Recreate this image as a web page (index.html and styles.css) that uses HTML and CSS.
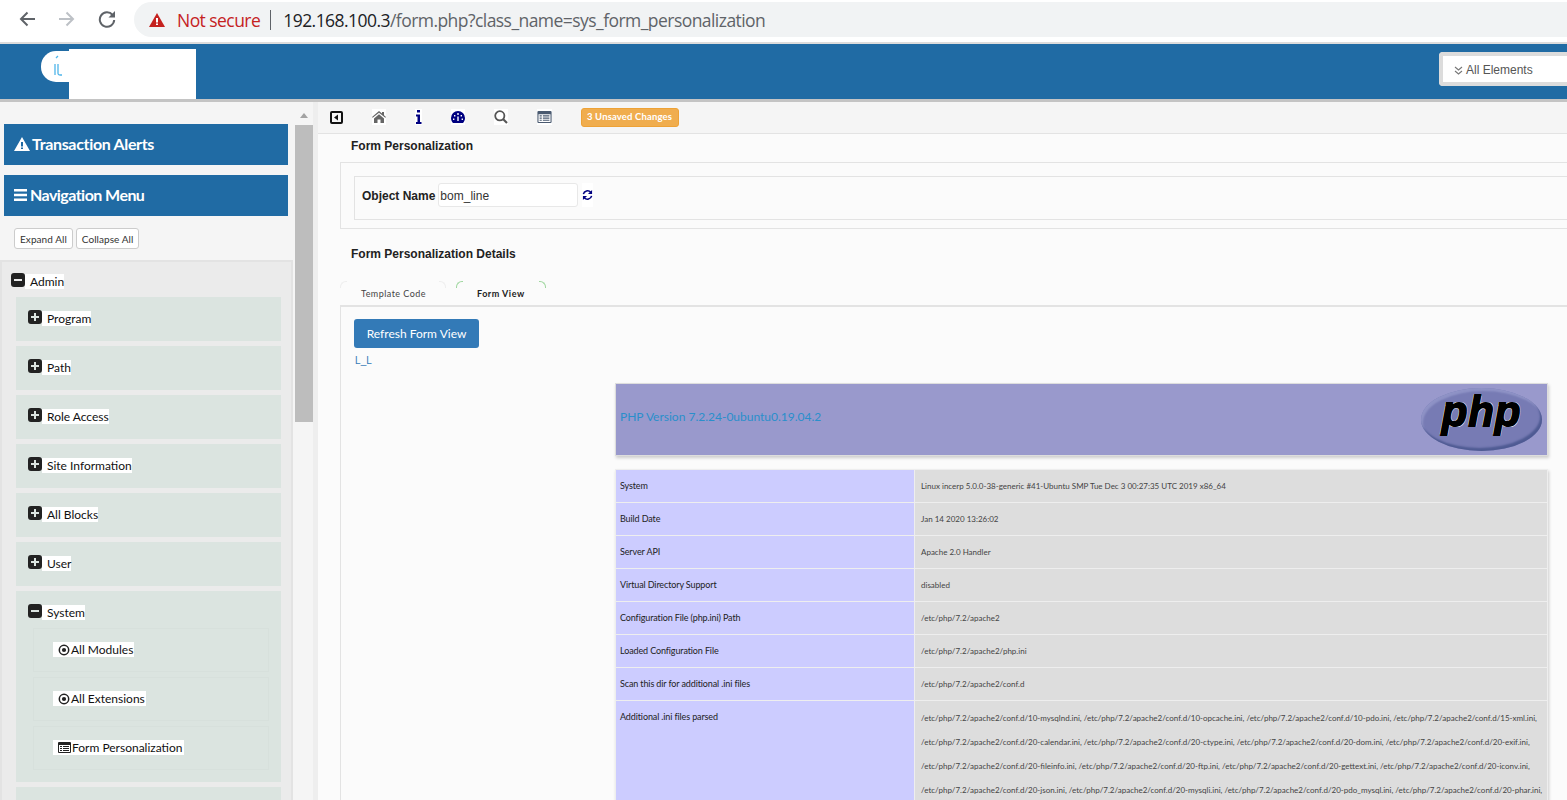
FILE: index.html
```html
<!DOCTYPE html>
<html lang="en">
<head>
<meta charset="utf-8">
<title>Form Personalization</title>
<link rel="stylesheet" href="styles.css">
</head>
<body>
<svg class="defs" aria-hidden="true">
  <symbol id="plus" viewBox="0 0 14 14"><path fill-rule="evenodd" d="M3 0h8a3 3 0 0 1 3 3v8a3 3 0 0 1-3 3H3a3 3 0 0 1-3-3V3a3 3 0 0 1 3-3zM6 3v3H3v2h3v3h2V8h3V6H8V3z"/></symbol>
  <symbol id="minus" viewBox="0 0 14 14"><path fill-rule="evenodd" d="M3 0h8a3 3 0 0 1 3 3v8a3 3 0 0 1-3 3H3a3 3 0 0 1-3-3V3a3 3 0 0 1 3-3zM3 6v2h8V6z"/></symbol>
  <symbol id="dot" viewBox="0 0 12 12"><circle cx="6" cy="6" r="4.700" fill="none" stroke="currentColor" stroke-width="1.500"/><circle cx="6" cy="6" r="2.100"/></symbol>
  <symbol id="list" viewBox="0 0 13 11"><path fill-rule="evenodd" d="M1 0h11a1 1 0 0 1 1 1v9a1 1 0 0 1-1 1H1a1 1 0 0 1-1-1V1a1 1 0 0 1 1-1zM1 3v7h11V3zM2 4h2v1H2zm3 0h6v1H5zM2 6h2v1H2zm3 0h6v1H5zM2 8h2v1H2zm3 0h6v1H5z"/></symbol>
</svg>

<div class="chrome">
  <svg class="nav-ic" viewBox="0 0 18 18"><path d="M17 9H3M9.500 2.500 3 9l6.500 6.500" fill="none" stroke="#5f6368" stroke-width="2"/></svg>
  <svg class="nav-ic" viewBox="0 0 18 18"><path d="M1 9h14M8.500 2.500 15 9l-6.500 6.500" fill="none" stroke="#bdc1c6" stroke-width="2"/></svg>
  <svg class="nav-ic" viewBox="0 0 18 18"><path d="M14.600 5A7.200 7.200 0 1 0 16.200 10" fill="none" stroke="#5f6368" stroke-width="2"/><path d="M17 1v6.500h-6.500z" fill="#5f6368"/></svg>
  <div class="omnibox">
    <svg class="warn-ic" viewBox="0 0 16 14"><path d="M8 0l8 14H0z" fill="#c5221f"/><path d="M7 5h2v4.500H7zM7 10.500h2V12H7z" fill="#fff"/></svg>
    <span class="insecure">Not secure</span>
    <span class="sep"></span>
    <span class="url"><b>192.168.100.3</b>/form.php?class_name=sys_form_personalization</span>
  </div>
</div>

<header class="topbar">
  <div class="logo">
    <div class="logo-mark">
      <svg viewBox="0 0 28 31"><path d="M15 7l2-2M14 13v11M17 13v9.500q0 1.500 2 1.500h2" fill="none" stroke="#4fb5ea" stroke-width="1.300"/></svg>
    </div>
    <div class="logo-mask"></div>
  </div>
  <div class="search-box">
    <svg class="chev" viewBox="0 0 9 9"><path d="M1 1l3.500 3L8 1M1 5l3.500 3L8 5" fill="none" stroke="#777" stroke-width="1.100"/></svg>
    <span>All Elements</span>
  </div>
</header>

<div class="body-row">
  <aside class="sidebar">
    <div class="side-inner">
      <h2 class="side-title alerts">
        <svg class="title-ic" viewBox="0 0 16 14"><path fill-rule="evenodd" d="M8 0l8 14H0zM7 5v4.500h2V5zm0 5.500V12h2v-1.500z" fill="#fff"/></svg>Transaction Alerts
      </h2>
      <h2 class="side-title menu">
        <svg class="title-ic bars" viewBox="0 0 13 12"><path d="M0 0h13v2.400H0zM0 4.800h13v2.400H0zM0 9.600h13V12H0z" fill="#fff"/></svg>Navigation Menu
      </h2>
      <div class="expand-row">
        <button class="mini-btn">Expand All</button>
        <button class="mini-btn">Collapse All</button>
      </div>
      <div class="tree">
        <div class="tree-root"><svg class="tog"><use href="#minus"/></svg><span class="lbl">Admin</span></div>
        <div class="node"><svg class="tog"><use href="#plus"/></svg><span class="lbl">Program</span></div>
        <div class="node"><svg class="tog"><use href="#plus"/></svg><span class="lbl">Path</span></div>
        <div class="node"><svg class="tog"><use href="#plus"/></svg><span class="lbl">Role Access</span></div>
        <div class="node"><svg class="tog"><use href="#plus"/></svg><span class="lbl">Site Information</span></div>
        <div class="node"><svg class="tog"><use href="#plus"/></svg><span class="lbl">All Blocks</span></div>
        <div class="node"><svg class="tog"><use href="#plus"/></svg><span class="lbl">User</span></div>
        <div class="node open">
          <div class="node-head"><svg class="tog"><use href="#minus"/></svg><span class="lbl">System</span></div>
          <div class="leaf"><span class="leaf-lbl"><svg class="leaf-ic"><use href="#dot"/></svg>All Modules</span></div>
          <div class="leaf"><span class="leaf-lbl"><svg class="leaf-ic"><use href="#dot"/></svg>All Extensions</span></div>
          <div class="leaf"><span class="leaf-lbl"><svg class="leaf-ic wide"><use href="#list"/></svg>Form Personalization</span></div>
        </div>
        <div class="node"></div>
      </div>
    </div>
    <div class="scrollbar">
      <span class="scroll-up"></span>
      <span class="scroll-thumb"></span>
    </div>
  </aside>

  <main class="main">
    <div class="toolbar">
      <svg class="tool t-toggle" viewBox="0 0 13 13"><path fill-rule="evenodd" d="M2 0h9a2 2 0 0 1 2 2v9a2 2 0 0 1-2 2H2a2 2 0 0 1-2-2V2a2 2 0 0 1 2-2zM2 2v9h9V2z" fill="#111"/><path d="M8 3.500v6L4 6.500z" fill="#111"/></svg>
      <span class="tool-bg"><svg class="tool" viewBox="0 0 14 12"><path d="M7 0l3 2.500V1h2v3.200L14 6l-.7.800L7 1.700.7 6.800 0 6zM2 7.500 7 3.300l5 4.200V12H8.500V8.500h-3V12H2z" fill="#666"/></svg></span>
      <span class="tool-bg"><svg class="tool t-info" viewBox="3.700 0 6.600 14"><path d="M5.500 0h3v2.500h-3zM4.500 4.500h4V12H10v2H4.500v-2H6V6.500H4.500z" fill="#000080"/></svg></span>
      <span class="tool-bg"><svg class="tool" viewBox="0 0 14 14"><path fill-rule="evenodd" d="M7 1a7 7 0 0 1 7 7c0 2-.8 3.600-2 5H2C.8 11.600 0 10 0 8a7 7 0 0 1 7-7zM6.300 3v2h1.400V3zM3 5v1.500h1.400V5zm6.600 0v1.500H11V5zM2 8.500V10h1.400V8.500zm8.600 0V10H12V8.500zM6.300 6.500V11h1.400V6.500z" fill="#000080"/></svg></span>
      <span class="tool-bg"><svg class="tool" viewBox="0 0 14 14"><circle cx="5.800" cy="5.800" r="4.600" fill="none" stroke="#555" stroke-width="1.800"/><path d="M9 9l4 4" stroke="#555" stroke-width="2.200"/></svg></span>
      <span class="tool-bg"><svg class="tool t-list"><use href="#list"/></svg></span>
      <span class="unsaved">3 Unsaved Changes</span>
    </div>

    <div class="content">
      <h3 class="sec-title">Form Personalization</h3>
      <section class="outer-box">
        <div class="inner-box">
          <label class="field-label">Object Name</label>
          <input class="field-input" type="text" value="bom_line">
          <span class="refresh-bg"><svg class="refresh" viewBox="0 0 12 12"><path d="M1.500 5A4.600 4.600 0 0 1 9.500 3M10.500 7A4.600 4.600 0 0 1 2.500 9" fill="none" stroke="#000080" stroke-width="1.700"/><path d="M11 .5V5H6.500zM1 11.500V7h4.500z" fill="#000080"/></svg></span>
        </div>
      </section>

      <h3 class="sec-title second">Form Personalization Details</h3>

      <div class="tabs">
        <span class="tab">Template Code</span>
        <span class="tab active">Form View</span>
      </div>

      <section class="tab-panel">
        <button class="refresh-btn">Refresh Form View</button>
        <a class="ll">L_L</a>

        <div class="phpinfo">
          <div class="php-head">
            <a class="php-ver">PHP Version 7.2.24-0ubuntu0.19.04.2</a>
            <div class="php-logo"><span class="php-word">php</span></div>
          </div>
          <table class="php-table">
            <tr><td class="k">System</td><td class="v">Linux incerp 5.0.0-38-generic #41-Ubuntu SMP Tue Dec 3 00:27:35 UTC 2019 x86_64</td></tr>
            <tr><td class="k">Build Date</td><td class="v">Jan 14 2020 13:26:02</td></tr>
            <tr><td class="k">Server API</td><td class="v">Apache 2.0 Handler</td></tr>
            <tr><td class="k">Virtual Directory Support</td><td class="v">disabled</td></tr>
            <tr><td class="k">Configuration File (php.ini) Path</td><td class="v">/etc/php/7.2/apache2</td></tr>
            <tr><td class="k">Loaded Configuration File</td><td class="v">/etc/php/7.2/apache2/php.ini</td></tr>
            <tr><td class="k">Scan this dir for additional .ini files</td><td class="v">/etc/php/7.2/apache2/conf.d</td></tr>
            <tr><td class="k">Additional .ini files parsed</td><td class="v multi">/etc/php/7.2/apache2/conf.d/10-mysqlnd.ini, /etc/php/7.2/apache2/conf.d/10-opcache.ini, /etc/php/7.2/apache2/conf.d/10-pdo.ini, /etc/php/7.2/apache2/conf.d/15-xml.ini,<br>/etc/php/7.2/apache2/conf.d/20-calendar.ini, /etc/php/7.2/apache2/conf.d/20-ctype.ini, /etc/php/7.2/apache2/conf.d/20-dom.ini, /etc/php/7.2/apache2/conf.d/20-exif.ini,<br>/etc/php/7.2/apache2/conf.d/20-fileinfo.ini, /etc/php/7.2/apache2/conf.d/20-ftp.ini, /etc/php/7.2/apache2/conf.d/20-gettext.ini, /etc/php/7.2/apache2/conf.d/20-iconv.ini,<br>/etc/php/7.2/apache2/conf.d/20-json.ini, /etc/php/7.2/apache2/conf.d/20-mysqli.ini, /etc/php/7.2/apache2/conf.d/20-pdo_mysql.ini, /etc/php/7.2/apache2/conf.d/20-phar.ini,</td></tr>
          </table>
        </div>
      </section>
    </div>
  </main>
</div>
</body>
</html>
```
FILE: styles.css
```css
* { box-sizing: border-box; }
html, body { margin: 0; height: 800px; overflow: hidden; background: #fff; }
body { font-family: "Lato", sans-serif; color: #111; display: flex; flex-direction: column; }
.defs { display: none; }

/* browser chrome */
.chrome { height: 42px; flex: none; display: flex; align-items: flex-start; padding: 2px 0 0 18px; background: #fff; }
.nav-ic { width: 18px; height: 18px; margin: 8px 22px 0 0; flex: none; }
.nav-ic:nth-child(3) { margin-right: 18px; }
.omnibox { flex: 1; height: 35px; background: #f1f3f4; border-radius: 18px 0 0 18px; display: flex; align-items: center; padding-left: 15px; font-family: "Open Sans", "Liberation Sans", sans-serif; font-size: 17.5px; }
.warn-ic { width: 16px; height: 14px; margin-right: 12px; }
.insecure { color: #c5221f; letter-spacing: -.55px; }
.sep { width: 1px; height: 20px; background: #5f6368; margin: 0 12px 0 10px; }
.url { color: #5f6368; letter-spacing: -.55px; }
.url b { font-weight: 400; color: #202124; }

/* header */
.topbar { height: 60px; flex: none; background: #206ba4; border-top: 2px solid #dcdcdc; border-bottom: 3px solid #c4c4c4; display: flex; justify-content: space-between; align-items: flex-start; }
.logo { display: flex; align-items: flex-start; margin-left: 41px; padding-top: 5px; }
.logo-mark { width: 28px; height: 31px; margin-top: 2px; background: #fff; border-radius: 15px 0 0 15px; }
.logo-mark svg { display: block; width: 28px; height: 31px; }
.logo-mask { width: 127px; height: 50px; background: #fff; }
.search-box { width: 128px; height: 34px; margin-top: 8px; background: #fff; border: 4px solid #dcdcdc; border-right: 0; border-radius: 4px 0 0 4px; display: flex; align-items: center; padding: 2px 0 0 11px; font-family: "Liberation Sans", sans-serif; font-size: 12px; color: #555; }
.chev { width: 9px; height: 9px; margin-right: 3px; }

/* layout */
.body-row { flex: 1; min-height: 0; display: flex; }

/* sidebar */
.sidebar { width: 318px; flex: none; display: flex; background: #f5f5f5; overflow: hidden; border-right: 5px solid #eee; }
.side-inner { width: 295px; flex: none; padding: 22px 0 0; }
.side-title { margin: 0 7px 10px 4px; width: 284px; height: 41px; background: #206ba4; color: #fff; font-size: 16px; font-weight: 700; display: flex; align-items: center; padding: 0 0 2px 10px; }
.side-title.alerts { letter-spacing: -.33px; }
.side-title.menu { letter-spacing: -.55px; }
.title-ic { width: 16px; height: 14px; margin-right: 2px; flex: none; }
.title-ic.bars { width: 13px; height: 12px; margin-right: 3px; }
.expand-row { display: flex; gap: 3px; padding: 2px 0 0 14px; height: 34px; }
.mini-btn { height: 21px; padding: 0 5px; background: #fff; border: 1px solid #ccc; border-radius: 3px; font-family: "Lato", sans-serif; font-size: 10px; letter-spacing: .06px; color: #333; }
.tree { width: 293px; background: #ebebeb; border: 2px solid #e3e3e3; border-bottom: 0; padding: 0 10px 0 14px; height: 560px; overflow: hidden; }
.tree-root { height: 35px; margin-left: -5px; padding-top: 11px; display: flex; align-items: flex-start; }
.tog { width: 14px; height: 14px; fill: #222; flex: none; }
.lbl { background: #fff; font-size: 12px; line-height: 15px; padding: 0 0 0 5px; margin-top: 1px; color: #111; }
.node { min-height: 44px; margin-bottom: 5px; background: #dbe4e0; padding: 13px 0 0 12px; display: flex; align-items: flex-start; }
.node.open { display: block; height: 191px; padding-left: 0; }
.node-head { display: flex; align-items: flex-start; padding-left: 12px; height: 24px; }
.leaf { width: 236px; height: 44px; margin: 0 0 5px 17px; border: 1px solid #d7e0dc; padding: 13px 0 0 19px; display: flex; align-items: flex-start; }
.leaf-lbl { display: flex; align-items: center; height: 15px; background: #fff; padding: 0 1px 0 5px; font-size: 12px; }
.leaf-ic { width: 12px; height: 12px; fill: #222; color: #222; margin-right: 1px; flex: none; }
.leaf-ic.wide { width: 13px; height: 11px; margin-right: 1px; }

/* scrollbar */
.scrollbar { width: 18px; flex: none; background: #f5f5f5; padding-top: 11px; display: flex; flex-direction: column; align-items: center; }
.scroll-up { width: 0; height: 0; border: 4.5px solid transparent; border-top: 0; border-bottom: 5px solid #a3a3a3; margin-bottom: 7px; }
.scroll-thumb { width: 18px; height: 297px; background: #bdbdbd; }

/* main */
.main { flex: 1; min-width: 0; overflow: hidden; background: #fbfbfb; }
.toolbar { height: 32px; background: #f5f5f5; border-bottom: 1px solid #e3e3e3; display: flex; align-items: center; gap: 29px; padding: 0 0 1px 12px; }
.tool { width: 14px; height: 14px; display: block; }
.t-toggle { width: 13px; height: 13px; }
.t-info { width: 7px; }
.t-list { width: 15px; height: 12px; fill: #4a5a70; }
.tool-bg { background: #fff; height: 16px; display: flex; align-items: center; }
.unsaved { height: 19px; padding: 0 5px; width: 98px; white-space: nowrap; background: #f0ad4e; border: 1px solid #eea236; border-radius: 3px; color: #fff; font: 700 9.5px/16px "Lato", sans-serif; letter-spacing: .15px; }
.content { padding-left: 22px; }
.sec-title { margin: 0; font: 700 12px/15px "Liberation Sans", sans-serif; color: #222; padding: 5px 0 8px 11px; height: 28px; }
.sec-title.second { height: 52px; padding-top: 18px; }
.outer-box { width: 1300px; height: 67px; border: 1px solid #e3e3e3; padding: 13px; background: #fbfbfb; }
.inner-box { height: 44px; border: 1px solid #e3e3e3; display: flex; align-items: center; padding: 0 0 6px 7px; }
.field-label { font: 700 12px "Liberation Sans", sans-serif; color: #222; margin: 2px 3px 0 0; }
.field-input { width: 140px; height: 24px; border: 1px solid #e8e8e8; border-radius: 3px; background: #fff; padding: 2px 0 0 1px; font: 12px "Liberation Sans", sans-serif; color: #333; }
.refresh-bg { background: #fff; margin-left: 4px; padding: 6px 0; width: 11px; }
.refresh { width: 11px; height: 12px; display: block; }

.tabs { height: 24px; display: flex; }
.tab { width: 106px; padding: 7px 0 0 21px; font-size: 9px; color: #444; letter-spacing: .45px; position: relative; }
.tab::before, .tab::after { content: ""; position: absolute; top: 0; width: 6px; height: 6px; border-top: 1px solid #eee; }
.tab::before { left: 0; border-left: 1px solid #eee; border-top-left-radius: 6px; }
.tab::after { right: 0; border-right: 1px solid #eee; border-top-right-radius: 6px; }
.tab.active { width: 90px; margin-left: 10px; padding-left: 21px; font-weight: 700; color: #222; letter-spacing: .5px; }
.tab.active::before, .tab.active::after { border-color: #9fd79f; }
.tab-panel { width: 1300px; height: 520px; border: 1px solid #e3e3e3; border-top-width: 2px; border-bottom: 0; padding: 12px 13px 0; background: #fbfbfb; }
.refresh-btn { display: block; width: 125px; height: 29px; padding: 0; background: #337ab7; color: #fff; border: 0; border-radius: 3px; font: 12px "Lato", sans-serif; }
.ll { display: block; margin-top: 6px; padding-left: 1px; font: 10px/13px "Liberation Sans", sans-serif; color: #337ab7; letter-spacing: .1px; }

.phpinfo { width: 933px; margin: 16px 0 0 261px; }
.php-head { height: 73px; background: #9999cc; border: 1px solid #ddd; box-shadow: 1px 2px 3px #ccc; display: flex; align-items: center; justify-content: space-between; padding: 0 5px 0 4px; }
.php-ver { font-size: 12px; color: #2a8fcb; margin-bottom: 6px; }
.php-logo { width: 121px; height: 63px; border-radius: 50%; background: #777bb4; display: flex; justify-content: center; align-items: center; box-shadow: inset -2px -3px 2px #4f5b93, inset 2px 3px 2px #8f93c6; }
.php-word { font: italic 700 42px/1 "Liberation Sans", sans-serif; color: #000; letter-spacing: .8px; -webkit-text-stroke: 1.8px #000; text-shadow: 1px 1px 0 #fff, -1px -1px 0 #fff, 1px -1px 0 #fff, -1px 1px 0 #fff; margin-top: -15px; }
.php-table { width: 933px; margin-top: 13px; border-collapse: collapse; table-layout: fixed; box-shadow: 1px 2px 3px #ccc; }
.php-table td { border: 1px solid #eee; vertical-align: middle; padding: 0 5px 1px; height: 33px; }
.k { width: 299px; background: #ccccff; font-size: 9px; color: #222; letter-spacing: -.12px; }
.php-table td.k { padding-left: 4px; }
.v { background: #ddd; font-size: 8px; color: #444; padding-left: 6px !important; white-space: nowrap; }
.php-table td.multi { vertical-align: top; line-height: 24px; padding-top: 5px; }
.php-table tr:last-child .k { vertical-align: top; padding-top: 10px; }
```
